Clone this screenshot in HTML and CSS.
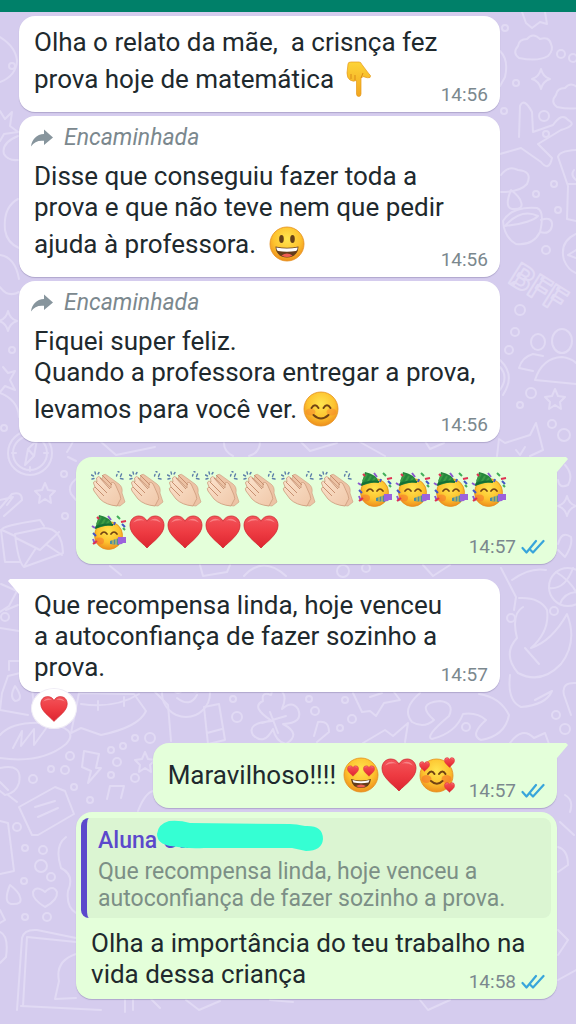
FILE: index.html
```html
<!DOCTYPE html>
<html lang="pt-BR">
<head>
    <meta charset="UTF-8">
    <meta name="viewport" content="width=device-width, initial-scale=1.0">
    <title>Conversa</title>
    <link rel="stylesheet" href="styles.css">
</head>
<body>

<!-- Shared icons and emoji -->
<svg class="sprites" aria-hidden="true">
    <defs>
        <radialGradient id="faceFill" cx="50%" cy="35%" r="65%">
            <stop offset="0" stop-color="#ffe54f"/>
            <stop offset="0.6" stop-color="#fdc32f"/>
            <stop offset="1" stop-color="#ee8f1c"/>
        </radialGradient>
        <linearGradient id="heartFill" x1="0" y1="0" x2="0" y2="1">
            <stop offset="0" stop-color="#f2545a"/>
            <stop offset="0.5" stop-color="#ee3b42"/>
            <stop offset="1" stop-color="#dc2530"/>
        </linearGradient>
        <linearGradient id="skinFill" x1="0" y1="0" x2="1" y2="1">
            <stop offset="0" stop-color="#fbe3cd"/>
            <stop offset="1" stop-color="#f0c8a9"/>
        </linearGradient>
        <linearGradient id="handFill" x1="0" y1="0" x2="0" y2="1">
            <stop offset="0" stop-color="#fdd437"/>
            <stop offset="1" stop-color="#f2a51f"/>
        </linearGradient>
    </defs>

    <symbol id="forward" viewBox="0 0 24 20">
        <path d="M14 1.5L23 9.5L14 17V12.8C8 12.2 4 14 1 18.5C2 11 6.500 6.500 14 6Z" fill="#87959d"/>
    </symbol>

    <symbol id="ticks" viewBox="0 0 24 16">
        <g fill="none" stroke="#38a5db" stroke-width="2.200" stroke-linecap="round" stroke-linejoin="round">
            <path d="M1.500 9L5.500 13.500L15 2"/>
            <path d="M9.500 11L12 13.500L22.500 2"/>
        </g>
    </symbol>

    <symbol id="heart" viewBox="0 0 36 36">
        <path d="M18 34C12 27.500 1 20.500 1 11.500C1 5.500 5 2 9.800 2C13.500 2 16.500 4 18 7.200C19.500 4 22.500 2 26.200 2C31 2 35 5.500 35 11.500C35 20.500 24 27.500 18 34Z" fill="url(#heartFill)" stroke="#cf2730" stroke-width="0.800"/>
        <path d="M4 8.500Q9 2 15.500 6.500Q10 5.500 4 8.500ZM21 6.500Q27 2 32 8.500Q26 5.500 21 6.500Z" fill="#fa9092" opacity="0.800"/>
    </symbol>

    <symbol id="pointDown" viewBox="0 0 36 36">
        <path d="M7 3Q7 1 10 1H18Q20 1 20.500 3L28 13Q30.500 14.500 29 16.500Q27 17.500 22 15.500L20 17.500V33Q19.800 35.500 17.800 35.500Q15.600 35.500 15.500 33V19.500Q12 21 9 19Q6 17 6 12Z" fill="url(#handFill)" stroke="#e5981b" stroke-width="0.700"/>
        <path d="M10 13V18M14 14V19M20 17L22 12" fill="none" stroke="#d98b19" stroke-width="1"/>
    </symbol>

    <symbol id="grin" viewBox="0 0 36 36">
        <circle cx="18" cy="18" r="17" fill="url(#faceFill)" stroke="#e58f20" stroke-width="0.800"/>
        <ellipse cx="12.500" cy="13" rx="2.300" ry="4" fill="#664018"/>
        <ellipse cx="23.500" cy="13" rx="2.300" ry="4" fill="#664018"/>
        <path d="M6.500 20.500Q18 23 29.500 20.500Q29 31 18 31.500Q7 31 6.500 20.500Z" fill="#643c1b"/>
        <path d="M7.300 21.500Q18 23.500 28.700 21.500Q28.500 24 27 25Q18 26.500 9 25Q7.500 24 7.300 21.500Z" fill="#fff"/>
        <path d="M12.500 29.500Q18 25.500 23.500 29.500Q18 32.500 12.500 29.500Z" fill="#ee5d54"/>
    </symbol>

    <symbol id="blush" viewBox="0 0 36 36">
        <circle cx="18" cy="18" r="17" fill="url(#faceFill)" stroke="#e58f20" stroke-width="0.800"/>
        <ellipse cx="7.500" cy="21" rx="5" ry="3.500" fill="#f5832c" opacity="0.500"/>
        <ellipse cx="28.500" cy="21" rx="5" ry="3.500" fill="#f5832c" opacity="0.500"/>
        <g fill="none" stroke="#714314" stroke-width="2" stroke-linecap="round">
            <path d="M8.500 17Q12 11.500 15.500 17M20.500 17Q24 11.500 27.500 17M10.500 24Q18 31 25.500 24"/>
        </g>
    </symbol>

    <symbol id="heartEyes" viewBox="0 0 36 36">
        <circle cx="18" cy="18" r="17" fill="url(#faceFill)" stroke="#e58f20" stroke-width="0.800"/>
        <use href="#heart" x="4" y="8" width="12" height="12"/>
        <use href="#heart" x="20" y="8" width="12" height="12"/>
        <path d="M8 22Q18 25 28 22Q27 31 18 31Q9 31 8 22Z" fill="#643c1b"/>
        <path d="M9.500 23Q18 25.500 26.500 23L25.500 25.500Q18 27 10.500 25.500Z" fill="#fff"/>
        <path d="M13 29Q18 26 23 29Q18 32 13 29Z" fill="#ee5d54"/>
    </symbol>

    <symbol id="loved" viewBox="0 0 36 36">
        <circle cx="17.500" cy="18.500" r="16.500" fill="url(#faceFill)" stroke="#e58f20" stroke-width="0.800"/>
        <ellipse cx="7.500" cy="22" rx="5" ry="4" fill="#f5732c" opacity="0.600"/>
        <ellipse cx="27.500" cy="22" rx="5" ry="4" fill="#f5732c" opacity="0.600"/>
        <path d="M9 17Q12.500 12 15.500 17M20 17Q23.500 12 26.500 17M12 24Q18 29.500 23.500 24" fill="none" stroke="#714314" stroke-width="2" stroke-linecap="round"/>
        <use href="#heart" x="0" y="4" width="11" height="11"/>
        <use href="#heart" x="25" y="0" width="11" height="11"/>
        <use href="#heart" x="25" y="25" width="11" height="11"/>
    </symbol>

    <symbol id="clap" viewBox="0 0 36 36">
        <path d="M10 19L7 11Q7 5 11 8L12 4Q14 2 17 5L28 13Q32 16 31 22L34 31L29 35Q24 35 20 33Q13 29 10 19Z" fill="#edc3a5" stroke="#cb9c7e" stroke-width="0.600"/>
        <path d="M3 20Q1 17 4 16L2.500 12Q3 9 6 11L5.500 7Q7.500 4 10 7L20 17L20 12Q23 10 25 15L29 24Q31 28 28 31L26 35Q15 34 9 28Z" fill="url(#skinFill)" stroke="#cc9b7b" stroke-width="0.800"/>
        <path d="M4 16L13 25M5 11L16 22M9 7L19 18M11 4L21 14" fill="none" stroke="#c78f70" stroke-width="1"/>
        <path d="M0.500 4L2.500 5M4 1L4.500 3M8 1.500L7 3M1 8L3 7.500M26 3.500L25.500 5M30.500 3L29.500 5.500M29.500 7.500L32 8M27 0.500L28 1" stroke="#5d7fa9" stroke-width="1.400" stroke-linecap="round"/>
    </symbol>

    <symbol id="party" viewBox="0 0 36 36">
        <circle cx="17.500" cy="21.500" r="14" fill="url(#faceFill)" stroke="#e58f20" stroke-width="0.800"/>
        <path d="M4 15L8 1Q19 3 22 11Q15 11 4 15Z" fill="#25863c"/>
        <path d="M6 10L10 3M10 12L14 5M15 11L18 7" stroke="#3c9c45" stroke-width="2"/>
        <path d="M4 14Q12 9 22 11" fill="none" stroke="#146f35" stroke-width="2"/>
        <ellipse cx="8.500" cy="27" rx="4.500" ry="3.500" fill="#f57a2d" opacity="0.600"/>
        <path d="M10 20Q13 16 16 20M20 20Q23 16 26 20" fill="none" stroke="#714314" stroke-width="1.700" stroke-linecap="round"/>
        <path d="M19 27L28 24V31L19 30Z" fill="#4c8ea0"/>
        <path d="M22 26V30M25 25V31" stroke="#e8c943" stroke-width="1"/>
        <path d="M27 23H35V29H32Q31 31 27 30Z" fill="#9c62dc"/>
        <path d="M17 2L20 6M2 25L4 30M1 12L4 14" stroke="#8b58cf" stroke-width="2"/>
        <path d="M26 2L29 5M32 14L34 16" stroke="#42ae5b" stroke-width="2"/>
        <path d="M24 8L23 11M31 10L34 13M2 19L5 22" stroke="#4457c7" stroke-width="2"/>
        <path d="M30 8L35 7M2 30L6 27M6 3L8 5" stroke="#df3151" stroke-width="2"/>
    </symbol>
</svg>

<header class="topbar"></header>

<main class="chat">
    <!-- Wallpaper -->
    <svg class="wallpaper" viewBox="0 12 576 1012" preserveAspectRatio="xMinYMin slice" aria-hidden="true">
        <defs>
            <path id="star" d="M0-10L3-3L10-2L5 3L6 10L0 6L-6 10L-5 3L-10-2L-3-3Z"/>
            <path id="spark" d="M0-10Q2-2 9 0Q2 2 0 10Q-2 2-9 0Q-2-2 0-10Z"/>
            <path id="cloud" d="M-14 10Q-21 5-15-2Q-14-9-6-9Q0-16 7-9Q16-12 18-4Q21 2 15 8Q5 14-14 10Z"/>
            <path id="drop" d="M-4-10Q-11 7-3 9Q9 10 6 2Q5-3-4-10Z"/>
            <path id="loveHeart" d="M0 11Q-13 3-12-4Q-9-11 0-4Q8-12 12-4Q13 4 0 11Z"/>
        </defs>
        <!-- right side -->
        <path d="M522 12L526 23L532 28L540 22L547 24L545 12"/>
        <use href="#cloud" x="533" y="48"/>
        <use href="#spark" x="541" y="79"/>
        <use href="#cloud" x="571" y="97"/>
        <path d="M500 51Q509 60 505 77L500 86"/>
        <path d="M519 137L520 106Q524 97 532 112L533 132L553 125Q562 112 568 120Q578 125 561 130L538 144L552 158Q549 172 541 162L521 148L500 154"/>
        <path d="M501 175Q508 165 518 170Q533 171 527 184Q520 192 501 192"/>
        <path d="M576 150Q559 151 558 157L568 186L567 219L576 221M568 184L576 184M574 170Q570 175 576 180"/>
        <use href="#drop" x="515" y="200"/>
        <path d="M503 221Q512 206 537 208Q545 211 540 232Q533 246 516 244Q504 237 503 221ZM505 226Q521 208 538 216Q531 223 505 226ZM541 220Q553 216 552 226Q550 235 540 232"/>
        <path d="M576 234Q559 242 564 260Q568 270 576 273M576 250L568 255L576 258"/>
        <text x="507" y="282" transform="rotate(32 507 282)">BFF</text>
        <ellipse cx="538" cy="342" rx="7" ry="8"/>
        <ellipse cx="562" cy="341" rx="10" ry="12"/>
        <path d="M576 384L535 380Q542 358 562 357Q571 358 576 363M533 371L519 368Q522 357 533 354L543 356"/>
        <path d="M500 360Q516 375 503 395M500 367Q509 377 500 390"/>
        <use href="#star" x="555" y="399"/>
        <path d="M497 456L499 439L505 443L530 435L536 423L540 438L543 450L530 456M516 450L520 455L525 447"/>
        <path d="M565 465Q574 475 568 485Q559 489 558 480M558 544Q562 530 571 537Q573 545 565 557L558 550"/>
        <use href="#spark" x="567" y="506"/>
        <!-- compass, clip and envelope -->
        <circle cx="30" cy="453" r="22"/>
        <circle cx="30" cy="453" r="17"/>
        <path d="M25 465L28 449L37 440L34 456ZM28 449L34 456M30 435V439M30 467V471M12 453H16M44 453H48"/>
        <use href="#star" x="45" y="493"/>
        <path d="M0 508L12 494Q22 491 22 500L4 516M0 500L13 497L7 505M15 534L44 528Q62 528 63 553L24 567Q18 562 15 534ZM16 538L40 550L59 532M25 565L36 548M47 545L62 555M15 536L2 530Q0 526 40 520L44 526M1 530L5 562L20 562"/>
        <path d="M67 452Q75 440 76 432M68 457L76 461M76 479Q67 486 71 494L76 500"/>
        <path d="M100 441L116 455L155 447M224 441Q223 451 233 456M260 441Q260 453 249 456M300 441L310 451L337 443M360 442L385 456M425 441L430 449L444 443"/>
        <!-- left side -->
        <path d="M0 37Q16 47 17 61Q16 76 0 82M0 111L5 119L12 112L10 126L18 132L4 134L0 141"/>
        <path d="M18 136Q1 143 4 154Q8 161 18 160M18 199Q3 207 5 230Q7 243 19 248M0 255Q15 257 19 279"/>
        <use href="#spark" x="8" y="321"/>
        <path d="M0 287Q8 298 19 292M3 367L8 373L15 371L10 380L15 390L5 386L0 392M0 393Q18 400 19 417M1 584L17 591L9 606L0 612M6 610L18 605M0 628L19 631"/>
        <path d="M9 670V661H29V670M8 676L24 672L31 680L34 706M8 676L2 693L0 710L28 715M15 686Q9 697 15 701Q25 700 15 686Z"/>
        <path d="M71 733L79 693L134 694L146 711Q139 727 101 735L81 728ZM81 704Q115 709 139 694M98 701V710M124 697V706"/>
        <!-- middle strip -->
        <circle cx="186" cy="693" r="24"/>
        <circle cx="178" cy="689" r="4"/>
        <circle cx="196" cy="688" r="4"/>
        <path d="M177 698Q190 708 197 695M155 692L168 705L171 741M204 707L219 704L225 740L208 744ZM207 733L222 729"/>
        <path d="M272 721Q250 707 263 701Q261 691 271 695Q272 687 280 690Q288 695 282 709Q292 700 298 709Q304 723 283 724Q302 734 286 744Q276 742 273 729Q264 746 253 735Q246 723 272 721ZM270 712L278 733M262 723L286 716"/>
        <path d="M353 693L362 712L370 711L376 716L384 703L400 700L394 692M370 697L382 693M363 743L385 730L393 736L408 723L405 742M314 736L318 722Q329 720 329 732L317 742"/>
        <path d="M420 693Q401 709 412 722Q424 729 434 720Q415 703 440 701Q455 703 449 716Q424 737 432 739Q456 733 463 714Q477 712 486 720Q469 735 481 740Q505 736 509 715Q500 697 479 694M510 743Q522 726 534 738L545 733L549 744"/>
        <circle cx="568" cy="587" r="19"/>
        <path d="M556 572Q576 584 580 603M549 588Q565 590 573 568M560 604Q564 593 576 592"/>
        <path d="M501 568L516 597L514 610M519 598Q540 597 547 610Q550 631 531 648Q552 641 567 614Q578 642 561 664Q541 685 518 673Q502 654 517 638Q511 614 523 607M510 675Q507 701 521 707Q546 705 552 691L535 700M525 648L539 664M546 570Q530 567 512 580"/>
        <path d="M576 683Q561 682 564 695L571 715M200 565L203 576L227 572L230 565M244 576Q263 555 286 576M423 565L433 576L450 565M110 566L121 575"/>
        <!-- lower left -->
        <path d="M0 735Q12 721 45 723Q81 728 66 744Q42 764 0 758M13 748L22 731L21 746L34 729L34 745L47 727M0 768Q23 763 19 783Q16 793 5 795L0 791M8 795L17 802M0 782L8 790"/>
        <path d="M84 751L99 754L96 768L101 768L88 783L91 771L82 767Z"/>
        <use href="#star" x="145" y="762"/>
        <path d="M107 799L110 786L124 786L121 798M19 807L55 787L65 791L74 814L38 835L32 835ZM35 807L55 801M38 817L58 808M138 811Q145 793 153 791"/>
        <path d="M0 821L8 823L14 871L0 874M66 837Q54 846 61 868Q75 875 68 891Q66 907 76 913"/>
        <use href="#drop" x="14" y="895"/>
        <use href="#loveHeart" x="45" y="896"/>
        <path d="M0 910L5 920L0 923M0 932Q9 936 6 957L0 963M17 1010L22 938Q24 929 37 930L76 938M23 1006L27 937L76 942M21 1006L101 1010M76 954Q55 961 59 981L55 999L76 998"/>
        <path d="M125 1000V1012M133 1000V1010M151 999L160 1008M186 1000L199 1010L220 1001M270 1000L293 1002M420 1000L428 1010L450 1000M560 822L574 835M558 847Q568 850 568 865L558 872M558 930L568 940L558 955M558 980L576 970M565 795Q574 800 570 812"/>
        <!-- small bubbles -->
        <g>
            <circle cx="505" cy="28" r="3"/><circle cx="561" cy="54" r="4"/><circle cx="573" cy="58" r="4"/><circle cx="516" cy="83" r="3"/><circle cx="544" cy="116" r="5"/><circle cx="504" cy="111" r="3"/><circle cx="546" cy="134" r="3"/>
            <circle cx="554" cy="184" r="3"/><circle cx="536" cy="194" r="3"/><circle cx="558" cy="210" r="3"/><circle cx="546" cy="250" r="4"/><circle cx="520" cy="310" r="5"/><circle cx="515" cy="332" r="4"/><circle cx="509" cy="350" r="4"/><circle cx="531" cy="393" r="5"/><circle cx="520" cy="405" r="3"/><circle cx="552" cy="424" r="4"/><circle cx="564" cy="435" r="6"/>
            <circle cx="64" cy="474" r="3"/><circle cx="65" cy="516" r="3"/><circle cx="12" cy="66" r="3"/><circle cx="12" cy="350" r="3"/><circle cx="4" cy="428" r="3"/><circle cx="5" cy="617" r="4"/><circle cx="343" cy="571" r="6"/><circle cx="366" cy="568" r="4"/>
            <circle cx="70" cy="756" r="4"/><circle cx="51" cy="769" r="3"/><circle cx="65" cy="770" r="4"/><circle cx="33" cy="779" r="4"/><circle cx="111" cy="750" r="3"/><circle cx="123" cy="746" r="3"/><circle cx="135" cy="738" r="3"/><circle cx="150" cy="738" r="5"/><circle cx="117" cy="762" r="4"/><circle cx="111" cy="775" r="3"/><circle cx="135" cy="778" r="4"/><circle cx="74" cy="787" r="3"/><circle cx="90" cy="800" r="3"/>
            <circle cx="17" cy="827" r="4"/><circle cx="25" cy="848" r="3"/><circle cx="43" cy="850" r="4"/><circle cx="41" cy="866" r="6"/><circle cx="51" cy="877" r="4"/><circle cx="24" cy="881" r="3"/><circle cx="25" cy="917" r="3"/><circle cx="47" cy="917" r="4"/>
            <circle cx="237" cy="717" r="5"/><circle cx="233" cy="699" r="3"/><circle cx="315" cy="711" r="4"/><circle cx="309" cy="699" r="3"/><circle cx="345" cy="700" r="3"/><circle cx="352" cy="719" r="4"/><circle cx="340" cy="728" r="3"/><circle cx="466" cy="727" r="4"/><circle cx="556" cy="715" r="4"/><circle cx="565" cy="729" r="5"/><circle cx="511" cy="618" r="4"/><circle cx="554" cy="611" r="4"/>
        </g>
    </svg>

    <article class="bubble received">
        <p>Olha o relato da mãe,&nbsp; a crisnça fez<br>prova hoje de matemática <svg class="emoji" role="img" aria-label="apontando para baixo"><use href="#pointDown"/></svg></p>
        <time>14:56</time>
    </article>

    <article class="bubble received">
        <div class="forwarded"><svg><use href="#forward"/></svg>Encaminhada</div>
        <p>Disse que conseguiu fazer toda a<br>prova e que não teve nem que pedir<br>ajuda à professora.&nbsp; <svg class="emoji" role="img" aria-label="sorriso"><use href="#grin"/></svg></p>
        <time>14:56</time>
    </article>

    <article class="bubble received">
        <div class="forwarded"><svg><use href="#forward"/></svg>Encaminhada</div>
        <p>Fiquei super feliz.<br>Quando a professora entregar a prova,<br>levamos para você ver. <svg class="emoji" role="img" aria-label="sorriso corado"><use href="#blush"/></svg></p>
        <time>14:56</time>
    </article>

    <article class="bubble sent first">
        <div class="emoji-list">
            <svg class="emoji"><use href="#clap"/></svg>
            <svg class="emoji"><use href="#clap"/></svg>
            <svg class="emoji"><use href="#clap"/></svg>
            <svg class="emoji"><use href="#clap"/></svg>
            <svg class="emoji"><use href="#clap"/></svg>
            <svg class="emoji"><use href="#clap"/></svg>
            <svg class="emoji"><use href="#clap"/></svg>
            <svg class="emoji"><use href="#party"/></svg>
            <svg class="emoji"><use href="#party"/></svg>
            <svg class="emoji"><use href="#party"/></svg>
            <svg class="emoji"><use href="#party"/></svg>
            <svg class="emoji"><use href="#party"/></svg>
            <svg class="emoji"><use href="#heart"/></svg>
            <svg class="emoji"><use href="#heart"/></svg>
            <svg class="emoji"><use href="#heart"/></svg>
            <svg class="emoji"><use href="#heart"/></svg>
        </div>
        <time>14:57 <svg><use href="#ticks"/></svg></time>
    </article>

    <article class="bubble received first reacted">
        <p>Que recompensa linda, hoje venceu<br>a autoconfiança de fazer sozinho a<br>prova.</p>
        <time>14:57</time>
        <button class="reaction" type="button" aria-label="Reação: coração"><svg><use href="#heart"/></svg></button>
    </article>

    <article class="bubble sent first short">
        <p>Maravilhoso!!!! <span class="emoji-run"><svg class="emoji"><use href="#heartEyes"/></svg><svg class="emoji"><use href="#heart"/></svg><svg class="emoji"><use href="#loved"/></svg></span></p>
        <time>14:57 <svg><use href="#ticks"/></svg></time>
    </article>

    <article class="bubble sent">
        <blockquote class="quote">
            <div class="quote-name">Aluna <span>Ca</span>
                <svg class="marker" viewBox="0 0 168 32" aria-hidden="true"><path d="M13 1Q24 0 34 3L134 4Q140 4 149 6Q167 5 167 19Q166 31 150 31L136 28L48 28Q31 29 15 26Q1 24 1 14Q2 4 13 1Z" fill="#35ffd3"/></svg>
            </div>
            Que recompensa linda, hoje venceu a autoconfiança de fazer sozinho a prova.
        </blockquote>
        <p>Olha a importância do teu trabalho na<br>vida dessa criança</p>
        <time>14:58 <svg><use href="#ticks"/></svg></time>
    </article>
</main>

</body>
</html>
```

FILE: styles.css
```css
:root {
    --header: #008069;
    --wallpaper: #d5ccee;
    --doodle: #e1daf4;
    --received: #ffffff;
    --sent: #e4ffda;
    --quote: #dbf5d2;
    --text: #20292d;
    --muted: #7b888e;
    --accent: #5b48cc;
}

* {
    box-sizing: border-box;
}

body {
    margin: 0;
    min-height: 100vh;
    display: flex;
    flex-direction: column;
    font-family: Roboto, "Liberation Sans", sans-serif;
    font-size: 26px;
    line-height: 31px;
    color: var(--text);
    background-color: var(--wallpaper);
}

.sprites {
    position: absolute;
    width: 0;
    height: 0;
}

.topbar {
    height: 12px;
    background-color: var(--header);
}

.chat {
    position: relative;
    flex: 1;
    display: flex;
    flex-direction: column;
    align-items: flex-start;
    gap: 4px;
    padding: 4px 19px 24px;
    overflow: hidden;
}

.wallpaper {
    position: absolute;
    top: 0;
    left: 0;
    width: 100%;
    height: 100%;
    fill: none;
    stroke: var(--doodle);
    stroke-width: 2;
    stroke-linejoin: round;
    stroke-linecap: round;
}

.wallpaper text {
    font-size: 34px;
    font-weight: bold;
}

/* text and time share one cell, the time sits in its corner */
.bubble {
    position: relative;
    display: grid;
    width: 89.4%;
    max-width: 640px;
    padding: 11px 12px 9px 15px;
    border-radius: 16px;
    box-shadow: 0 1px 1px rgba(90, 80, 130, 0.3);
}

.received {
    background-color: var(--received);
}

.sent {
    align-self: flex-end;
    background-color: var(--sent);
}

.bubble p,
.emoji-list {
    grid-area: 2 / 1;
    margin: 0;
}

.bubble time {
    grid-area: 2 / 1;
    place-self: end;
    display: flex;
    align-items: center;
    gap: 5px;
    font-size: 19px;
    line-height: 16px;
    color: var(--muted);
}

.bubble time svg {
    width: 24px;
    height: 16px;
}

/* tail of the first bubble in a group */
.first {
    margin-top: 11px;
}

.first::before {
    content: "";
    position: absolute;
    top: 0;
    width: 28px;
    height: 16px;
}

.received.first::before {
    left: -11px;
    background-color: var(--received);
    clip-path: polygon(0 2px, 2px 0, 100% 0, 100% 100%, 11px 15px);
}

.sent.first::before {
    right: -11px;
    background-color: var(--sent);
    clip-path: polygon(0 0, 26px 0, 100% 2px, 17px 15px, 0 100%);
}

.forwarded {
    display: flex;
    align-items: center;
    gap: 10px;
    margin: -5px 0 8px -4px;
    font-size: 23px;
    font-style: italic;
    color: var(--muted);
}

.forwarded svg {
    width: 24px;
    height: 20px;
}

.emoji {
    width: 36px;
    height: 36px;
    margin-top: 3px;
    vertical-align: -9px;
}

.bubble p:has(.emoji) {
    padding-bottom: 6px;
}

.emoji-list {
    display: flex;
    flex-wrap: wrap;
    gap: 4px 2px;
    padding: 0 20px 5px 0;
}

.reacted {
    margin-bottom: 36px;
}

.reaction {
    position: absolute;
    left: 12px;
    bottom: -37px;
    display: flex;
    justify-content: center;
    align-items: center;
    width: 46px;
    height: 41px;
    padding: 0;
    border: 1px solid #f0edf6;
    border-radius: 50%;
    background-color: var(--received);
}

.reaction svg {
    width: 28px;
    height: 28px;
}

.short {
    display: flex;
    width: auto;
    gap: 14px;
}

.short time {
    align-self: flex-end;
}

.emoji-run {
    display: inline-flex;
    gap: 2px;
    vertical-align: -9px;
}

.quote {
    grid-area: 1 / 1;
    margin: -5px -6px 10px -10px;
    padding: 6px 12px 6px 11px;
    border-left: 6px solid var(--accent);
    border-radius: 8px;
    background-color: var(--quote);
    font-size: 23px;
    line-height: 27px;
    color: #7c8f86;
}

.quote-name {
    position: relative;
    height: 34px;
    line-height: 33px;
    font-weight: 500;
    color: var(--accent);
}

.marker {
    position: absolute;
    left: 58px;
    top: -4px;
    width: 168px;
    height: 32px;
}
```
